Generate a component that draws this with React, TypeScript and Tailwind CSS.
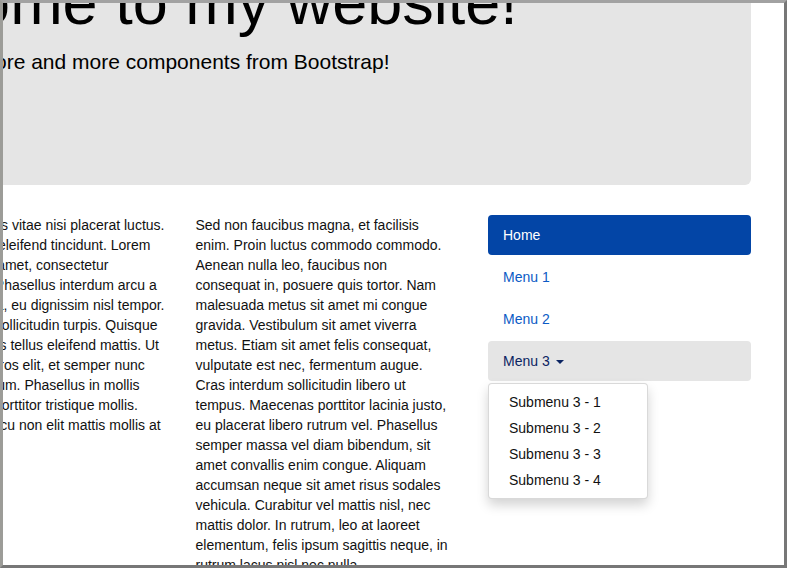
const SECOND_COLUMN = [
  'Donec eu cursus vitae nisi placerat luctus.',
  'Mauris sed leo eleifend tincidunt. Lorem',
  'ipsum dolor sit amet, consectetur',
  'adipiscing elit. Phasellus interdum arcu a',
  'Aenean ac nulla, eu dignissim nisl tempor.',
  'Cras et augue sollicitudin turpis. Quisque',
  'Nulla ut faucibus tellus eleifend mattis. Ut',
  'Vivamus eget eros elit, et semper nunc',
  'Donec elementum. Phasellus in mollis',
  'Curabitur quis porttitor tristique mollis.',
  'Pellentesque arcu non elit mattis mollis at',
  'nisi.',
];

const THIRD_COLUMN = [
  'Sed non faucibus magna, et facilisis',
  'enim. Proin luctus commodo commodo.',
  'Aenean nulla leo, faucibus non',
  'consequat in, posuere quis tortor. Nam',
  'malesuada metus sit amet mi congue',
  'gravida. Vestibulum sit amet viverra',
  'metus. Etiam sit amet felis consequat,',
  'vulputate est nec, fermentum augue.',
  'Cras interdum sollicitudin libero ut',
  'tempus. Maecenas porttitor lacinia justo,',
  'eu placerat libero rutrum vel. Phasellus',
  'semper massa vel diam bibendum, sit',
  'amet convallis enim congue. Aliquam',
  'accumsan neque sit amet risus sodales',
  'vehicula. Curabitur vel mattis nisl, nec',
  'mattis dolor. In rutrum, leo at laoreet',
  'elementum, felis ipsum sagittis neque, in',
  'rutrum lacus nisl nec nulla.',
];

const SUBMENU = ['Submenu 3 - 1', 'Submenu 3 - 2', 'Submenu 3 - 3', 'Submenu 3 - 4'];

export default function App() {
  return (
    <div
      className="w-[787px] h-[568px] overflow-hidden bg-white border-[3px] border-t-[#a2a2a2] border-l-[#9c9c98] border-r-[#777777] border-b-[#777777] text-[14px] leading-5 text-[#111111]"
      style={{ fontFamily: '"Liberation Sans", Arial, sans-serif' }}
    >
      <div className="ml-[-392.5px] w-[1140px]">
        {/* jumbotron */}
        <div className="mt-[-83.5px] mb-[30px] bg-[#e5e5e5] rounded-[6px] px-[60px] pt-[48px] pb-[93px] text-black">
          <h1 className="text-[63px] leading-[1.1] mb-[10px] whitespace-nowrap">Hello, welcome to my website!</h1>
          <p className="text-[21px] leading-[30px] mb-[15px] whitespace-nowrap">
            The website is designed to learn more and more components from Bootstrap!
          </p>
        </div>

        <div className="flex gap-[30px]">
          <div className="w-[262.5px] shrink-0">
            <p>
              Lorem ipsum dolor sit amet, consectetur adipiscing elit. Integer nec odio. Praesent libero. Sed
              cursus ante dapibus diam. Sed nisi. Nulla quis sem at nibh elementum imperdiet.
            </p>
          </div>

          <div className="w-[262.5px] shrink-0">
            <p className="whitespace-nowrap">
              {SECOND_COLUMN.map((line, i) => (
                <span key={i} className="block">
                  {line}
                </span>
              ))}
            </p>
          </div>

          <div className="w-[262.5px] shrink-0">
            <p className="whitespace-nowrap">
              {THIRD_COLUMN.map((line, i) => (
                <span key={i} className="block">
                  {line}
                </span>
              ))}
            </p>
          </div>

          <div className="w-[262.5px] shrink-0">
            <ul className="flex flex-col gap-[2px]">
              <li>
                <a className="block px-[15px] py-[10px] rounded-[4px] bg-[#0345a6] text-white">Home</a>
              </li>
              <li>
                <a className="block px-[15px] py-[10px] rounded-[4px] text-[#0c5bc5]">Menu 1</a>
              </li>
              <li>
                <a className="block px-[15px] py-[10px] rounded-[4px] text-[#0c5bc5]">Menu 2</a>
              </li>
              <li className="relative">
                <a className="block px-[15px] py-[10px] rounded-[4px] bg-[#e5e5e5] text-[#0b2462]">
                  Menu 3{' '}
                  <span className="inline-block w-0 h-0 ml-[2px] align-middle border-t-[4px] border-x-[4px] border-x-transparent border-t-[#0b2462]" />
                </a>
                <ul className="absolute left-0 top-full mt-[2px] min-w-[160px] py-[5px] bg-white border border-black/15 rounded-[4px] shadow-[0_6px_12px_rgba(0,0,0,0.175)]">
                  {SUBMENU.map((item) => (
                    <li key={item}>
                      <a className="block px-[20px] py-[3px] text-[#111111] whitespace-nowrap">{item}</a>
                    </li>
                  ))}
                </ul>
              </li>
            </ul>
          </div>
        </div>
      </div>
    </div>
  );
}
